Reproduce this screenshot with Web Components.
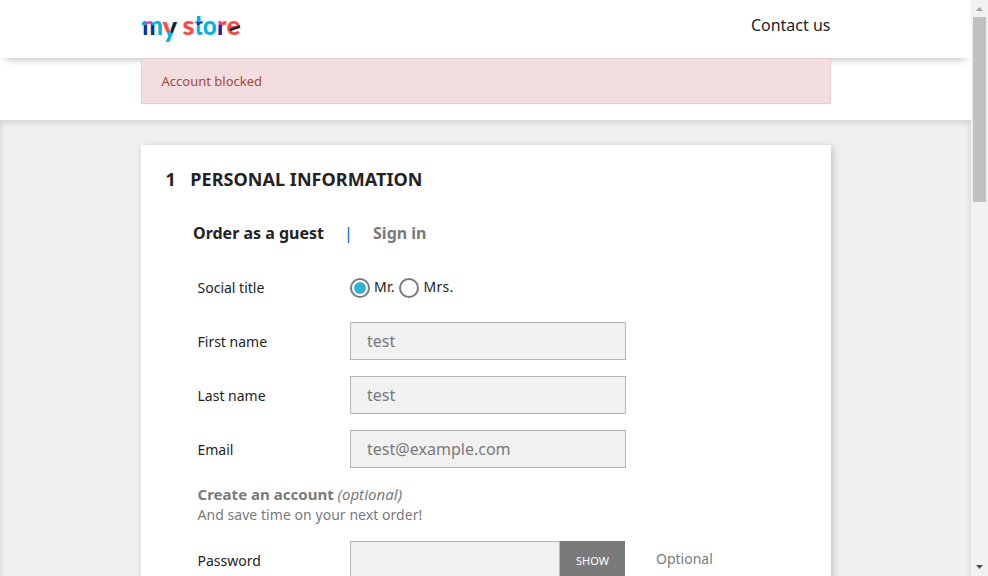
<!DOCTYPE html>
<html lang="en">
<head>
<meta charset="utf-8">
<title>my store</title>
<style>
html,body{margin:0;height:100%;overflow:hidden}
body{font-family:"Noto Sans",sans-serif;font-size:16px;color:#232323;background:#f0f0f0}
</style>
</head>
<body>
<store-page></store-page>
<script>
const define = (name, markup) => customElements.define(name, class extends HTMLElement {
  constructor() {
    super();
    const t = document.createElement('template');
    t.innerHTML = markup;
    this.attachShadow({mode: 'open'}).append(t.content.cloneNode(true));
    for (const a of this.getAttributeNames()) {
      const el = this.shadowRoot.querySelector(`[data-${a}]`);
      if (el) el.textContent = this.getAttribute(a);
    }
  }
});

define('store-logo', `<style>:host{display:block;width:110px;height:44px}svg{display:block;overflow:visible}
text{font-family:Lato,sans-serif;font-weight:900;font-size:26px;fill:url(#ink)}</style>
<svg width="110" height="44" viewBox="0 0 110 44">
<defs>
<pattern id="ink" patternUnits="userSpaceOnUse" width="110" height="44">
<path fill="#04b3df" d="M0 0h110v44H0z"/>
<path fill="#0a2da0" d="M3 12h10v12H3zM56 9h6v3h-6zM77 12h5v12h-5z"/>
<path fill="#d53fc0" d="M4 7h7v5H4zM77 6h4v6h-4z"/>
<path fill="#ff4a43" d="M21 5h9v14h-9zM42 5h11.500v20H42zM81 6h20v19H81z"/>
<path fill="#0d2b33" d="M30 5h8v15h-8z"/>
</pattern>
</defs>
<path d="M1 9h4v3.500H1z" fill="#04b3df"/>
<text x="1" y="22" textLength="21" lengthAdjust="spacingAndGlyphs">m</text>
<text x="21.500" y="24" textLength="14.500" lengthAdjust="spacingAndGlyphs" style="font-size:29px">y</text>
<text x="41.500" y="22" textLength="12" lengthAdjust="spacingAndGlyphs">s</text>
<text x="53.700" y="22" textLength="8" lengthAdjust="spacingAndGlyphs">t</text>
<path d="M56 3h3.500v6H56z" fill="#04b3df"/>
<text x="61.800" y="22" textLength="14" lengthAdjust="spacingAndGlyphs">o</text>
<text x="75.900" y="22" textLength="9.500" lengthAdjust="spacingAndGlyphs">r</text>
<text x="85.500" y="22" textLength="14" lengthAdjust="spacingAndGlyphs">e</text>
<path d="M89 17L99 13.500" stroke="#0d2b33" stroke-width="2.600"/>
</svg>`);

define('site-header', `<style>:host{display:flex;justify-content:space-between;box-sizing:border-box;height:58px;padding:13px 140.500px 0 141px;background:#fff;box-shadow:0 6px 8px -5px rgba(0,0,0,.28);position:relative}
a{line-height:24px}</style><store-logo></store-logo><a><slot></slot></a>`);

define('alert-box', `<style>:host{display:block;box-sizing:border-box;height:46px;border:1px solid #ebcccc;background:#f2dede;color:#a94442;font-size:13px;line-height:20px;padding:12px 19.5px;position:relative;z-index:1}</style><slot></slot>`);

define('scroll-bar', `<style>:host{display:flex;flex-direction:column;justify-content:space-between;align-items:center;box-sizing:border-box;width:17px;height:576px;background:#f1f1f1}
svg{display:block}i{width:13px;height:185px;background:#c1c1c1;margin-bottom:auto}</style>
<svg width="17" height="17"><path d="M5 11l3.5-4L12 11z" fill="#a3a3a3"/></svg><i></i><svg width="17" height="17"><path d="M5 6h7L8.500 10z" fill="#505050"/></svg>`);

define('form-row', `<style>:host{display:flex;height:38px;margin-bottom:16px;font-size:14px}
label{width:152.500px;line-height:40px}</style><label data-label></label><slot></slot>`);

define('text-field', `<style>:host{display:block;box-sizing:border-box;width:276px;height:38px;border:1px solid #b5b5b5;background:#f1f1f1;color:#7a7a7a;font-size:16.050px;line-height:36px;padding-left:16px}
:host([narrow]){width:210px}</style><slot></slot>`);

define('radio-option', `<style>:host{display:flex;height:38px;align-items:center;margin-right:4.500px;line-height:38px;letter-spacing:.3px}
i{box-sizing:border-box;width:20px;height:20px;border:2px solid #7a7a7a;border-radius:50%;padding:2px;margin:2px 4px 0 0}
:host([checked]) i::after{content:"";display:block;width:12px;height:12px;border-radius:50%;background:#2fb5d2}</style><i></i><slot></slot>`);

define('show-button', `<style>:host{display:block;width:65px;height:38px;background:#7a7a7a;color:#fff;font-size:11px;line-height:40px;text-align:center}</style><slot></slot>`);

define('checkout-step', `<style>:host{display:block;box-sizing:border-box;height:600px;background:#fff;box-shadow:2px 2px 8px 0 rgba(0,0,0,.2);padding:21px 25px}
h1{display:flex;gap:14.500px;margin:0 0 0 -.5px;font-size:18px;letter-spacing:.05px;line-height:26px;font-weight:700}
nav{display:flex;gap:23px;margin:29px 0 0 27px;line-height:24px;font-weight:700}
.off{color:#7a7a7a}.bar{color:#0069b4;font-weight:400;width:3px;text-indent:-3px}
section{margin:23px 0 0 31.500px}
p{margin:0 0 15px;padding-top:1px;height:41px;line-height:20px;font-size:14px;letter-spacing:.05px;color:#7a7a7a}p b,p em{font-size:15px;letter-spacing:.03px;line-height:1}
.note{font-size:14px;color:#7a7a7a;line-height:36px;margin-left:31px}</style>
<h1><span>1</span><span>PERSONAL INFORMATION</span></h1>
<nav><span>Order as a guest</span><span class="bar">|</span><span class="off">Sign in</span></nav>
<section>
<form-row label="Social title"><radio-option checked>Mr.</radio-option><radio-option>Mrs.</radio-option></form-row>
<form-row label="First name"><text-field>test</text-field></form-row>
<form-row label="Last name"><text-field>test</text-field></form-row>
<form-row label="Email"><text-field>test@example.com</text-field></form-row>
<p><b>Create an account</b> <em>(optional)</em><br>And save time on your next order!</p>
<form-row label="Password"><text-field narrow></text-field><show-button>SHOW</show-button><span class="note">Optional</span></form-row>
</section>`);

define('store-page', `<style>:host{display:flex;height:576px;overflow:hidden}
main{width:971px;height:576px;overflow:hidden}
aside{height:62px;padding:0 140px 0 141px;background:#fff}
.wrap{padding:25px 140px 0 141px;height:700px;box-shadow:inset 0 2px 7px 0 rgba(0,0,0,.14);background:#f0f0f0}</style>
<main><site-header>Contact us</site-header><aside><alert-box>Account blocked</alert-box></aside>
<div class="wrap"><checkout-step></checkout-step></div></main><scroll-bar></scroll-bar>`);
</script>
</body>
</html>
